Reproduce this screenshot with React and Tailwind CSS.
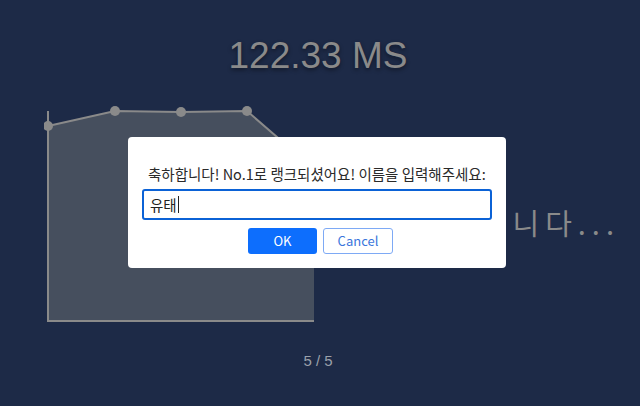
import React from "react";

export default function App() {
  return (
    <div className="relative w-full h-[406px] overflow-hidden bg-[#1d2a47] font-['Liberation_Sans',sans-serif]">
      <div className="pt-[35px] pr-[4px] text-center text-[37px] leading-[42px] text-[#8a8a8a] [text-shadow:0_2px_4px_rgba(0,0,0,0.45)]">
        122.33 MS
      </div>
      <div className="mt-[27px] flex h-[220px]">
        <div className="pl-[44px] shrink-0">
          <svg width="276" height="220" viewBox="0 0 276 220">
            <polygon points="4,22 71,7 137,8 203,7 270,65 270,217 4,217" fill="#464f5e" />
            <polyline points="4,22 71,7 137,8 203,7 270,65" fill="none" stroke="#8a8a8a" strokeWidth="2" />
            <line x1="4" y1="7" x2="4" y2="218" stroke="#8a8a8a" strokeWidth="2" />
            <line x1="3" y1="217" x2="270" y2="217" stroke="#8a8a8a" strokeWidth="2" />
            <circle cx="4" cy="22" r="5" fill="#8a8a8a" />
            <circle cx="71" cy="7" r="5" fill="#8a8a8a" />
            <circle cx="137" cy="8" r="5" fill="#8a8a8a" />
            <circle cx="203" cy="7" r="5" fill="#8a8a8a" />
          </svg>
        </div>
        <div className="flex-1 flex justify-end pr-[20px] pt-[99px]">
          <div className="text-[29px] leading-[38px] tracking-[6px] text-[#8a8a8a] font-['Noto_Sans_CJK_KR',sans-serif] whitespace-nowrap">
            로딩 중입니다...
          </div>
        </div>
      </div>
      <div className="mt-[29px] pr-[4px] text-center text-[15px] leading-[16px] text-[#9aa0aa]">5 / 5</div>

      <div className="absolute left-[128px] top-[137px] w-[378px] h-[131px] rounded-[4px] bg-white font-['Noto_Sans_CJK_KR',sans-serif]">
        <div className="pt-[27px] pl-[20px] text-[14.5px] leading-[20px] text-[#2a2a2a] whitespace-nowrap">
          축하합니다! No.1로 랭크되셨어요! 이름을 입력해주세요:
        </div>
        <div className="mt-[5px] ml-[14px] w-[350px] h-[31px] rounded-[3px] border-2 border-[#0b62d6] flex items-center pl-[6px] text-[14.5px] text-[#222]">
          유태<span className="ml-[1px] inline-block w-[1px] h-[17px] bg-[#222]" />
        </div>
        <div className="mt-[8px] flex justify-center gap-[6px] pl-[7px]">
          <div className="w-[69px] h-[26px] rounded-[3px] bg-[#0d6efd] text-white text-[13px] flex items-center justify-center">OK</div>
          <div className="w-[70px] h-[26px] rounded-[3px] border border-[#7eaaf5] text-[#3a76dc] text-[13px] flex items-center justify-center">Cancel</div>
        </div>
      </div>
    </div>
  );
}
